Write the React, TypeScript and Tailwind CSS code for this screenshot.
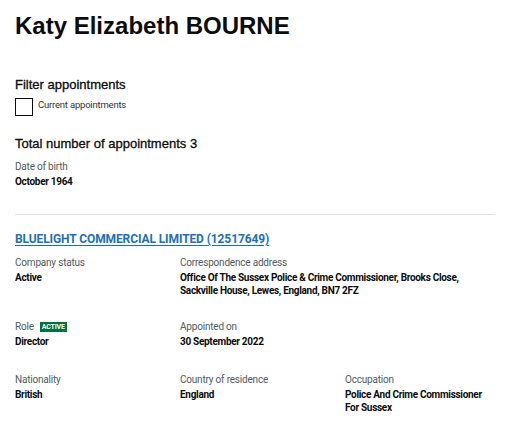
import React from 'react';

const Field: React.FC<{ label: React.ReactNode; value: React.ReactNode }> = ({ label, value }) => (
  <div>
    <div className="text-[10px] leading-[14px] text-[#505a5f] tracking-[-0.2px]">{label}</div>
    <div className="mt-[1px] text-[10px] leading-[13px] font-bold text-[#0b0c0c] tracking-[-0.3px]">{value}</div>
  </div>
);

const App: React.FC = () => {
  return (
    <div className="min-h-screen bg-white px-[15px] pt-[11px] font-['Roboto','Liberation_Sans',Arial,sans-serif] text-[#0b0c0c]">
      <h1 className="font-['Liberation_Sans',Arial,sans-serif] text-[24px] leading-[30px] font-bold">Katy Elizabeth BOURNE</h1>

      <h2 className="mt-[36px] font-['Liberation_Sans',Arial,sans-serif] text-[13px] leading-[16px] [-webkit-text-stroke:0.3px_#0b0c0c]">Filter appointments</h2>
      <label className="mt-[5px] flex items-center gap-[5px]">
        <span className="block w-[18px] h-[18px] border-[1.5px] border-[#0b0c0c] bg-white" />
        <span className="text-[9.5px] leading-[12px] tracking-[-0.2px] text-[#333] -mt-[4px]">Current appointments</span>
      </label>

      <h2 className="mt-[20px] font-['Liberation_Sans',Arial,sans-serif] text-[13px] leading-[16px] [-webkit-text-stroke:0.3px_#0b0c0c]">Total number of appointments 3</h2>

      <div className="mt-[8px]">
        <Field label="Date of birth" value="October 1964" />
      </div>

      <hr className="mt-[26px] mr-[7px] border-0 border-t border-[#e0e0e0]" />

      <a href="#" className="mt-[16px] block w-fit text-[12px] leading-[16px] font-bold text-[#1d70b8] underline underline-offset-2 tracking-[-0.1px]">
        BLUELIGHT COMMERCIAL LIMITED (12517649)
      </a>

      <div className="mt-[9px] grid grid-cols-[165px_165px_1fr]">
        <Field label="Company status" value="Active" />
        <div className="col-span-2">
          <Field
            label="Correspondence address"
            value={<>Office Of The Sussex Police &amp; Crime Commissioner, Brooks Close,<br />Sackville House, Lewes, England, BN7 2FZ</>}
          />
        </div>
      </div>

      <div className="mt-[23px] grid grid-cols-[165px_165px_1fr]">
        <Field
          label={
            <span className="flex items-center gap-[6px]">
              Role
              <span className="bg-[#00703c] text-white font-bold text-[7px] leading-[10px] px-[2px] tracking-[-0.2px]">ACTIVE</span>
            </span>
          }
          value="Director"
        />
        <Field label="Appointed on" value="30 September 2022" />
      </div>

      <div className="mt-[25px] grid grid-cols-[165px_165px_1fr]">
        <Field label="Nationality" value="British" />
        <Field label="Country of residence" value="England" />
        <Field label="Occupation" value={<>Police And Crime Commissioner<br />For Sussex</>} />
      </div>
    </div>
  );
};

export default App;
